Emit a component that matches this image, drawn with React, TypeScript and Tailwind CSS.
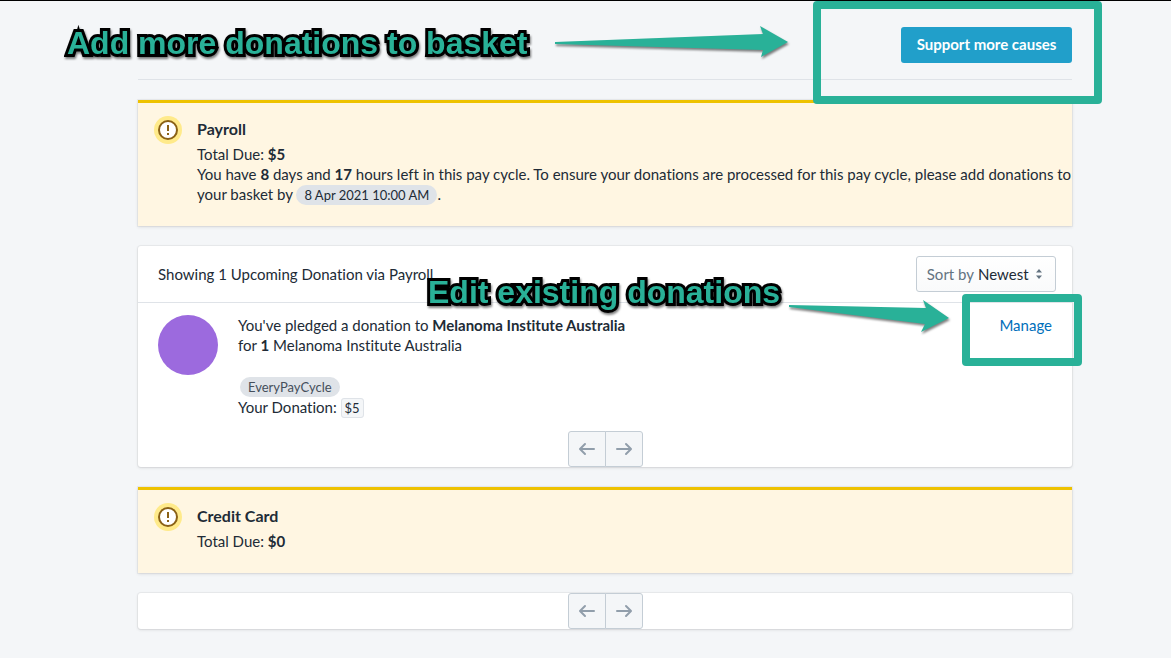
import type { ReactNode } from "react";

const CARD_SHADOW =
  "shadow-[0_0_0_1px_rgba(63,63,68,0.05),0_1px_3px_0_rgba(63,63,68,0.15)]";

function AlertIcon() {
  return (
    <svg viewBox="0 0 28 28" className="h-7 w-7 shrink-0" aria-hidden="true">
      <circle cx="14" cy="14" r="14" fill="#ffea8a" />
      <circle cx="14" cy="14" r="9" fill="#fff" stroke="#8a6116" strokeWidth="2" />
      <path d="M13 9h2v6h-2zM13 17h2v2h-2z" fill="#8a6116" />
    </svg>
  );
}

function Banner({ title, children }: { title: string; children: ReactNode }) {
  return (
    <section
      className={`flex gap-[15px] border-t-[3px] border-[#eec200] bg-[#fff6e2] pt-[13px] pb-[22px] pl-4 ${CARD_SHADOW}`}
    >
      <AlertIcon />
      <div className="min-w-0 flex-1">
        <h2 className="mb-[3px] text-base leading-[25px] font-bold">{title}</h2>
        {children}
      </div>
    </section>
  );
}

function Pagination() {
  const button =
    "flex h-9 items-center justify-center border border-[#c4cdd5] bg-[#f4f6f8]";

  return (
    <nav className="flex justify-center" aria-label="Pagination">
      <button type="button" aria-label="Previous" className={`${button} w-[38px] rounded-l-[3px]`}>
        <svg viewBox="0 0 20 20" className="h-5 w-5" fill="#919eab" aria-hidden="true">
          <path d="M17 9H5.414l3.293-3.293a.999.999 0 1 0-1.414-1.414l-5 5a.999.999 0 0 0 0 1.414l5 5a.997.997 0 0 0 1.414 0 .999.999 0 0 0 0-1.414L5.414 11H17a1 1 0 1 0 0-2" />
        </svg>
      </button>
      <button type="button" aria-label="Next" className={`${button} -ml-px w-[38px] rounded-r-[3px]`}>
        <svg viewBox="0 0 20 20" className="h-5 w-5" fill="#919eab" aria-hidden="true">
          <path d="M17.707 9.293l-5-5a.999.999 0 1 0-1.414 1.414L14.586 9H3a1 1 0 1 0 0 2h11.586l-3.293 3.293a.999.999 0 1 0 1.414 1.414l5-5a.999.999 0 0 0 0-1.414" />
        </svg>
      </button>
    </nav>
  );
}

function Caption({ className, children }: { className: string; children: ReactNode }) {
  return (
    <p
      className={`pointer-events-none absolute font-['Liberation_Sans',Arial,sans-serif] text-[32px] leading-9 font-bold whitespace-nowrap text-[#29b198] drop-shadow-[1px_2px_1px_rgba(0,0,0,0.5)] [-webkit-text-stroke:6px_black] [paint-order:stroke_fill] ${className}`}
    >
      {children}
    </p>
  );
}

export default function App() {
  return (
    <div className="min-h-screen overflow-hidden border-t border-black bg-[#f4f6f8] pr-[99px] pb-7 pl-[138px] font-[Lato,sans-serif] text-[15px] leading-5 text-[#212b36] [font-variant-ligatures:none]">
      <main className="flex flex-col gap-5">
        <header className="relative flex justify-end border-b border-[#dfe3e8] pt-[26px] pb-4">
          <button
            type="button"
            className="h-9 w-[171px] rounded-[3px] bg-[#219fca] pb-0.5 font-bold text-white"
          >
            Support more causes
          </button>
          <Caption className="top-6 -left-[71px]">Add more donations to basket</Caption>
          <svg
            viewBox="0 0 240 44"
            className="pointer-events-none absolute top-5 right-[280px] h-11 w-[240px] drop-shadow-[1px_2px_1px_rgba(0,0,0,0.5)]"
            fill="#29b198"
            aria-hidden="true"
          >
            <path d="M3 21 L211 13 L208 5 L236 21 L209 36 L211 29 L3 23 Z" />
          </svg>
          <div className="pointer-events-none absolute top-0 -right-[30px] z-10 h-[103px] w-[289px] rounded border-8 border-[#29b198]" />
        </header>

        <Banner title="Payroll">
          <p>
            Total Due: <b>$5</b>
          </p>
          <p>
            You have <b>8</b> days and <b>17</b> hours left in this pay cycle. To ensure your
            donations are processed for this pay cycle, please add donations to your basket by{" "}
            <span className="rounded-full bg-[#dfe3e8] px-2 py-0.5 text-[13px] leading-none">
              8 Apr 2021 10:00 AM
            </span>
            .
          </p>
        </Banner>

        <section className={`relative rounded-[3px] bg-white ${CARD_SHADOW}`}>
          <div className="flex items-center justify-between border-b border-[#dfe3e8] py-2.5 pr-4 pl-5">
            <p>Showing 1 Upcoming Donation via Payroll</p>
            <div className="flex h-9 items-center gap-1 rounded-[3px] border border-[#c4cdd5] bg-linear-to-b from-white to-[#f9fafb] px-2.5">
              <label htmlFor="sort" className="text-[#637381]">
                Sort by
              </label>
              <select id="sort" className="appearance-none bg-transparent outline-none">
                <option>Newest</option>
              </select>
              <svg viewBox="0 0 12 12" className="h-3 w-3" fill="#637381" aria-hidden="true">
                <path d="M6 1l3 3.500H3zM6 11l3-3.500H3z" />
              </svg>
            </div>
          </div>

          <div className="flex items-start gap-5 px-5 pt-3">
            <div className="h-[60px] w-[60px] shrink-0 rounded-full bg-[#9c6ade]" />
            <div className="min-w-0 flex-1">
              <p>
                You've pledged a donation to <b>Melanoma Institute Australia</b>
              </p>
              <p>
                for <b>1</b> Melanoma Institute Australia
              </p>
              <p className="mt-5 leading-[22px]">
                <span className="ml-0.5 rounded-full bg-[#dfe3e8] px-2 py-0.5 text-[13px] leading-none text-[#454f5b]">
                  EveryPayCycle
                </span>
              </p>
              <p>
                Your Donation:{" "}
                <span className="rounded-[3px] border border-[#dfe3e8] bg-[#f4f6f8] px-[3px] py-px text-[13px] leading-none">
                  $5
                </span>
              </p>
            </div>
            <a href="#manage" className="text-[#006fbb]">
              Manage
            </a>
          </div>

          <div className="mt-3.5">
            <Pagination />
          </div>

          <Caption className="top-7 left-[290px]">Edit existing donations</Caption>
          <svg
            viewBox="0 0 168 44"
            className="pointer-events-none absolute top-[50px] right-[120px] h-11 w-[168px] drop-shadow-[1px_2px_1px_rgba(0,0,0,0.5)]"
            fill="#29b198"
            aria-hidden="true"
          >
            <path d="M5 9 L142 12 L139 4 L165 22 L137 36 L141 28 L5 11 Z" />
          </svg>
          <div className="pointer-events-none absolute top-12 -right-2.5 h-[72px] w-[120px] rounded border-8 border-[#29b198]" />
        </section>

        <Banner title="Credit Card">
          <p>
            Total Due: <b>$0</b>
          </p>
        </Banner>

        <section className={`rounded-[3px] bg-white ${CARD_SHADOW}`}>
          <Pagination />
        </section>
      </main>
    </div>
  );
}
